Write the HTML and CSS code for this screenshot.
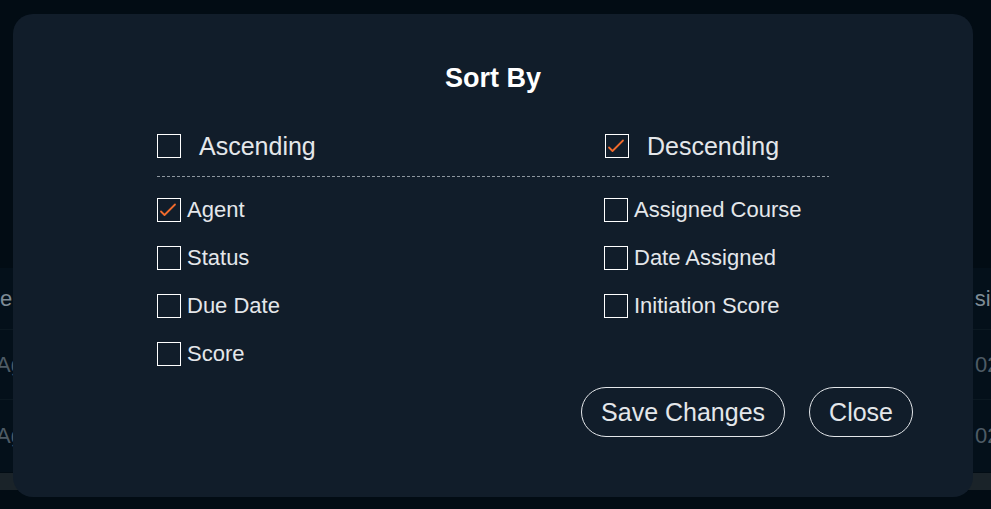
FILE: index.html
```html
<!DOCTYPE html>
<html lang="en">
<head>
<meta charset="utf-8">
<title>Sort By</title>
<link rel="stylesheet" href="styles.css">
</head>
<body>
<div class="page">
  <div class="top-space"></div>
  <div class="table">
    <div class="trow thead">
      <div class="cell-left">Agent</div>
      <div class="cell-right">Assigned</div>
    </div>
    <div class="trow">
      <div class="cell-left">Agent Name</div>
      <div class="cell-right">02/14</div>
    </div>
    <div class="trow">
      <div class="cell-left">Agent Name</div>
      <div class="cell-right">02/14</div>
    </div>
  </div>
  <div class="scrollbar"></div>

  <div class="modal">
    <h2 class="title">Sort By</h2>
    <div class="body">
      <div class="order-row">
        <label class="opt opt-lg"><span class="box"></span><span>Ascending</span></label>
        <label class="opt opt-lg"><span class="box checked"><svg viewBox="0 0 24 24" width="24" height="24"><path d="M4 13.5 L7.5 17 L18 6.5" fill="none" stroke="#ef6a2c" stroke-width="1.8" stroke-linecap="round" stroke-linejoin="round"/></svg></span><span>Descending</span></label>
      </div>
      <div class="divider"></div>
      <div class="fields">
        <label class="opt"><span class="box checked"><svg viewBox="0 0 24 24" width="24" height="24"><path d="M4 13.5 L7.5 17 L18 6.5" fill="none" stroke="#ef6a2c" stroke-width="1.8" stroke-linecap="round" stroke-linejoin="round"/></svg></span><span>Agent</span></label>
        <label class="opt"><span class="box"></span><span>Assigned Course</span></label>
        <label class="opt"><span class="box"></span><span>Status</span></label>
        <label class="opt"><span class="box"></span><span>Date Assigned</span></label>
        <label class="opt"><span class="box"></span><span>Due Date</span></label>
        <label class="opt"><span class="box"></span><span>Initiation Score</span></label>
        <label class="opt"><span class="box"></span><span>Score</span></label>
      </div>
      <div class="actions">
        <button class="btn">Save Changes</button>
        <button class="btn">Close</button>
      </div>
    </div>
  </div>
</div>
</body>
</html>
```

FILE: styles.css
```css
* { box-sizing: border-box; }
html, body {
  margin: 0;
  padding: 0;
  background: #020c14;
  font-family: "Liberation Sans", Arial, sans-serif;
}
.page {
  position: relative;
  width: 991px;
  height: 509px;
  overflow: hidden;
  display: flex;
  flex-direction: column;
}
.top-space { height: 268px; }
.table { background: #04101a; }
.trow {
  display: flex;
  justify-content: space-between;
  align-items: center;
  height: 70px;
  border-bottom: 1px solid #0b1821;
  font-size: 22px;
  color: #4e5b65;
  white-space: nowrap;
}
.trow.thead { height: 62px; color: #7e8b95; }
.trow:last-child { border-bottom: none; height: 72px; }
.cell-left { text-indent: -4px; overflow: hidden; width: 40px; }
.thead .cell-left { text-indent: -27px; }
.cell-right { width: 16px; overflow: hidden; }
.thead .cell-right { text-indent: -26px; }
.scrollbar {
  height: 17px;
  background: #1a2329;
  margin-top: 1px;
}

.modal {
  position: absolute;
  left: 13px;
  top: 14px;
  width: 960px;
  height: 483px;
  background: #111d2a;
  border-radius: 20px;
  padding: 49px 60px 0 144px;
  color: #e4e7ea;
}
.title {
  margin: 0 -60px 0 -144px;
  text-align: center;
  font-size: 27px;
  line-height: 30px;
  font-weight: bold;
  color: #ffffff;
}
.body { margin-top: 41px; }
.order-row {
  display: grid;
  grid-template-columns: 448px auto;
}
.opt {
  display: flex;
  align-items: center;
  gap: 6px;
  font-size: 22px;
  height: 24px;
  line-height: 24px;
  white-space: nowrap;
}
.opt-lg { font-size: 25px; gap: 18px; }
.box {
  width: 24px;
  height: 24px;
  border: 1.5px solid #ffffff;
  flex: none;
  position: relative;
}
.box svg {
  position: absolute;
  left: -1.5px;
  top: -1.5px;
}
.divider {
  width: 672px;
  height: 1px;
  margin-top: 18px;
  background: repeating-linear-gradient(90deg, #8d969e 0 3px, transparent 3px 5px);
}
.fields {
  margin-top: 21px;
  display: grid;
  grid-template-columns: 447px auto;
  row-gap: 24px;
}
.actions {
  margin-top: 21px;
  display: flex;
  justify-content: flex-end;
  gap: 24px;
}
.btn {
  height: 50px;
  padding: 0 19px;
  border: 1px solid #e4e7ea;
  border-radius: 25px;
  background: transparent;
  color: #e4e7ea;
  font-family: "Liberation Sans", Arial, sans-serif;
  font-size: 25px;
}
```
